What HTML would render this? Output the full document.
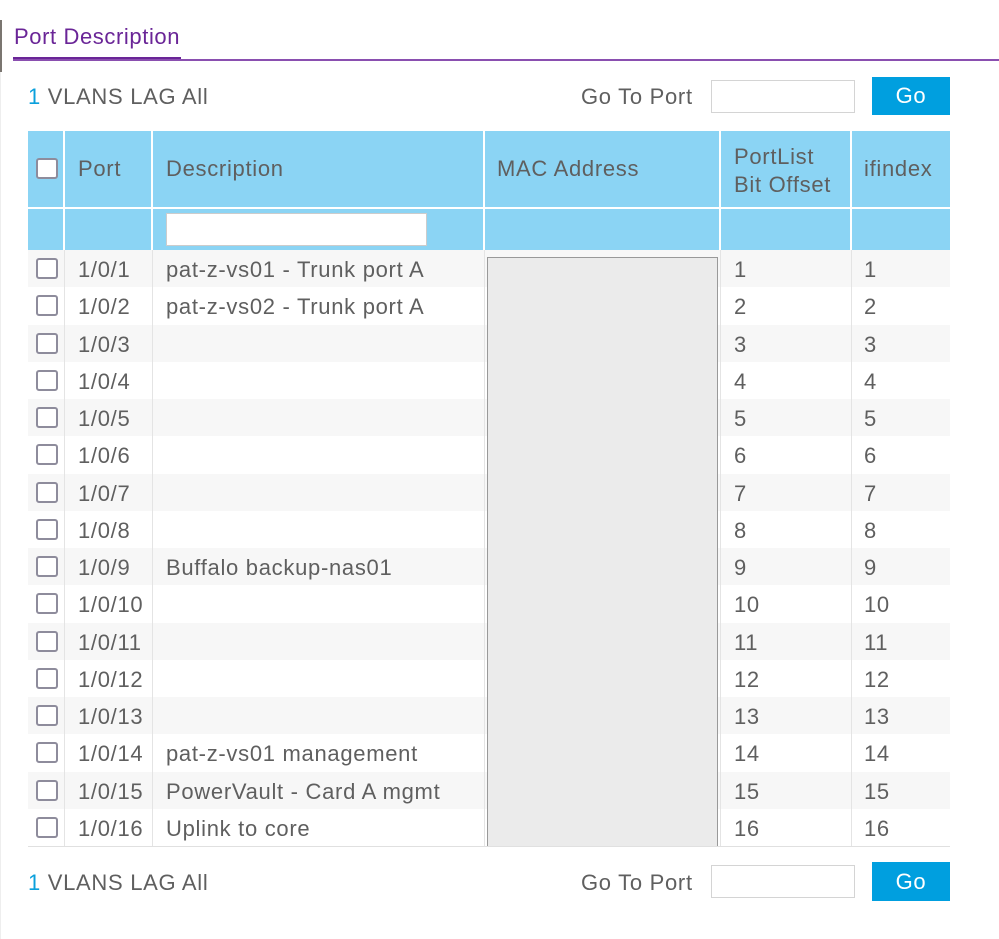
<!DOCTYPE html>
<html><head><meta charset="utf-8"><style>
*{margin:0;padding:0;box-sizing:border-box}
body{width:999px;height:939px;background:#fff;position:relative;overflow:hidden;font-family:"Liberation Sans",Arial,sans-serif;color:#5f5f5f;font-size:22px;letter-spacing:0.7px}
.a{position:absolute}
.t{position:absolute;white-space:nowrap;line-height:1}
.cb{position:absolute;left:36px;width:22px;height:21px;border:2px solid #8e8c9c;border-radius:3px;background:#fff}
.vl{position:absolute;width:1px;background:#e4e4e4}
.hv{position:absolute;width:2px;background:#fff;top:131px;height:119px}
</style></head><body>
<div class="a" style="left:0;top:20px;width:2px;height:52px;background:#7a7570"></div>
<div class="a" style="left:0;top:72px;width:1px;height:867px;background:#eee"></div>
<div class="t" style="left:14px;top:26px;font-size:22px;letter-spacing:0.6px;color:#6a2597">Port Description</div>
<div class="a" style="left:13px;top:57px;width:168px;height:3px;background:#6a2597"></div>
<div class="a" style="left:13px;top:59px;width:986px;height:2px;background:#8a4fb0"></div>

<div class="t" style="left:28px;top:86px"><span style="color:#0aa0dc">1</span> VLANS LAG All</div>
<div class="t" style="left:581px;top:86px">Go To Port</div>
<div class="a" style="left:711px;top:80px;width:144px;height:33px;border:1px solid #d4d4d4"></div>
<div class="a" style="left:872px;top:77px;width:78px;height:38px;background:#009fdf;color:#fff;text-align:center;line-height:38px">Go</div>

<div class="a" style="left:28px;top:131px;width:922px;height:119px;background:#8bd4f4"></div>
<div class="a" style="left:28px;top:207px;width:922px;height:2px;background:#fff"></div>
<div class="hv" style="left:63px"></div><div class="hv" style="left:151px"></div><div class="hv" style="left:483px"></div><div class="hv" style="left:719px"></div><div class="hv" style="left:850px"></div>
<div class="cb" style="top:158px"></div>
<div class="t" style="left:78px;top:158px">Port</div>
<div class="t" style="left:166px;top:158px">Description</div>
<div class="t" style="left:497px;top:158px">MAC Address</div>
<div class="t" style="left:734px;top:143px;line-height:28px">PortList<br>Bit Offset</div>
<div class="t" style="left:864px;top:158px">ifindex</div>
<div class="a" style="left:166px;top:213px;width:261px;height:33px;background:#fff;border:1px solid #ccc"></div>

<div id="rows"></div>
<div class="a" style="left:28px;top:846px;width:922px;height:1px;background:#e0e0e0"></div>
<div class="vl" style="left:64px;top:250px;height:596px"></div>
<div class="vl" style="left:152px;top:250px;height:596px"></div>
<div class="vl" style="left:484px;top:250px;height:596px"></div>
<div class="vl" style="left:720px;top:250px;height:596px"></div>
<div class="vl" style="left:851px;top:250px;height:596px"></div>
<div class="a" style="left:487px;top:257px;width:231px;height:589px;background:#ebebeb;border:1px solid #999;border-bottom:none"></div>

<div class="t" style="left:28px;top:872px"><span style="color:#0aa0dc">1</span> VLANS LAG All</div>
<div class="t" style="left:581px;top:872px">Go To Port</div>
<div class="a" style="left:711px;top:865px;width:144px;height:33px;border:1px solid #d4d4d4"></div>
<div class="a" style="left:872px;top:862px;width:78px;height:39px;background:#009fdf;color:#fff;text-align:center;line-height:39px">Go</div>

<script>
var d=["pat-z-vs01 - Trunk port A","pat-z-vs02 - Trunk port A","","","","","","","Buffalo backup-nas01","","","","","pat-z-vs01 management","PowerVault - Card A mgmt","Uplink to core"];
var h="";
for(var i=0;i<16;i++){var y=250+i*37.25;
if(i%2==0)h+='<div class="a" style="left:28px;top:'+y+'px;width:922px;height:37.25px;background:#f7f7f7"></div>';
var ty=y+9;
h+='<div class="cb" style="top:'+(y+8)+'px"></div>';
h+='<div class="t" style="left:78px;top:'+ty+'px">1/0/'+(i+1)+'</div>';
h+='<div class="t" style="left:166px;top:'+ty+'px">'+d[i]+'</div>';
h+='<div class="t" style="left:734px;top:'+ty+'px">'+(i+1)+'</div>';
h+='<div class="t" style="left:864px;top:'+ty+'px">'+(i+1)+'</div>';}
document.getElementById("rows").outerHTML=h;
</script>
</body></html>
